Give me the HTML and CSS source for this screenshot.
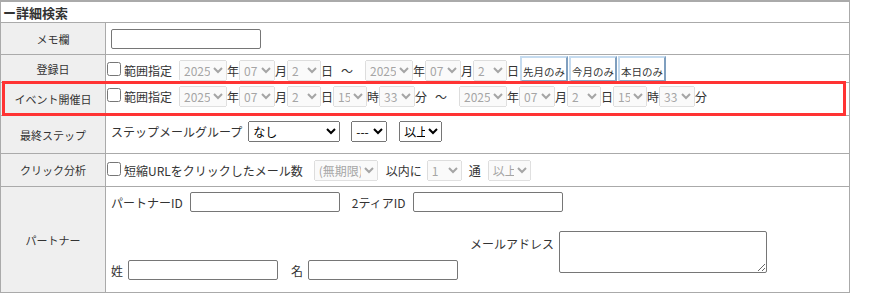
FILE: index.html
```html
<!DOCTYPE html>
<html lang="ja">

<head>
  <meta charset="UTF-8" />
  <meta name="viewport" content="width=device-width, initial-scale=1.0" />
  <title>詳細検索</title>
  <link rel="stylesheet" href="styles.css">
</head>

<body>

  <div class="search-panel">
    <table class="search-table">
      <tr class="head-row">
        <th colspan="2">ー詳細検索</th>
      </tr>

      <!-- メモ -->
      <tr class="row-memo">
        <td class="label">メモ欄</td>
        <td class="field"><input type="text" class="txt"></td>
      </tr>

      <!-- 登録日 -->
      <tr class="row-reg">
        <td class="label">登録日</td>
        <td class="field">
          <div class="line">
            <input type="checkbox" class="chk"><span class="range-text">範囲指定</span>
            <select class="sel-year" disabled><option>2025</option></select><span class="unit">年</span>
            <select class="sel-month" disabled><option>07</option></select><span class="unit">月</span>
            <select class="sel-day" disabled><option>2</option></select><span class="unit">日</span>
            <span class="tilde">～</span>
            <select class="sel-year" disabled><option>2025</option></select><span class="unit">年</span>
            <select class="sel-month" disabled><option>07</option></select><span class="unit">月</span>
            <select class="sel-day" disabled><option>2</option></select><span class="unit">日</span>
            <button class="quick-btn">先月のみ</button>
            <button class="quick-btn">今月のみ</button>
            <button class="quick-btn">本日のみ</button>
          </div>
        </td>
      </tr>

      <!-- イベント開催日 -->
      <tr class="row-event">
        <td class="label">イベント開催日</td>
        <td class="field">
          <div class="line">
            <input type="checkbox" class="chk"><span class="range-text">範囲指定</span>
            <select class="sel-year" disabled><option>2025</option></select><span class="unit">年</span>
            <select class="sel-month" disabled><option>07</option></select><span class="unit">月</span>
            <select class="sel-day" disabled><option>2</option></select><span class="unit">日</span>
            <select class="sel-hour" disabled><option>15</option></select><span class="unit">時</span>
            <select class="sel-min" disabled><option>33</option></select><span class="unit">分</span>
            <span class="tilde">～</span>
            <select class="sel-year" disabled><option>2025</option></select><span class="unit">年</span>
            <select class="sel-month" disabled><option>07</option></select><span class="unit">月</span>
            <select class="sel-day" disabled><option>2</option></select><span class="unit">日</span>
            <select class="sel-hour" disabled><option>15</option></select><span class="unit">時</span>
            <select class="sel-min" disabled><option>33</option></select><span class="unit">分</span>
          </div>
        </td>
      </tr>

      <!-- 最終ステップ -->
      <tr class="row-step">
        <td class="label">最終ステップ</td>
        <td class="field">
          <div class="line">
            <span>ステップメールグループ</span>
            <select class="sel-group"><option>なし</option></select>
            <select class="sel-num"><option>---</option></select>
            <select class="sel-cmp"><option>以上</option></select>
          </div>
        </td>
      </tr>

      <!-- クリック分析 -->
      <tr class="row-click">
        <td class="label">クリック分析</td>
        <td class="field">
          <div class="line">
            <input type="checkbox" class="chk"><span>短縮URLをクリックしたメール数</span>
            <select class="sel-period" disabled><option>(無期限)</option></select>
            <span class="within">以内に</span>
            <select class="sel-count" disabled><option>1</option></select>
            <span class="tsu">通</span>
            <select class="sel-cmp" disabled><option>以上</option></select>
          </div>
        </td>
      </tr>

      <!-- パートナー -->
      <tr class="row-partner">
        <td class="label">パートナー</td>
        <td class="field partner">
          <div class="partner-line">
            <span>パートナーID</span><input type="text" class="txt">
            <span class="next-label">2ティアID</span><input type="text" class="txt">
          </div>
          <div class="partner-bottom">
            <div class="name-group">
              <span>姓</span><input type="text" class="txt">
              <span class="next-label">名</span><input type="text" class="txt">
            </div>
            <div class="mail-group">
              <span class="mail-label">メールアドレス</span>
              <textarea class="mail-box"></textarea>
            </div>
          </div>
        </td>
      </tr>
    </table>

    <!-- 注目枠 -->
    <div class="highlight"></div>
  </div>

</body>

</html>
```

FILE: styles.css
```css
body {
  margin: 0;
  padding: 0;
  font-family: "Noto Sans CJK JP", "Noto Sans", sans-serif;
  font-size: 12px;
  color: #333;
  background-color: #fff;
}

.search-panel {
  position: relative;
  width: 876px;
}

.search-table {
  width: 850px;
  border-collapse: collapse;
  border: 1px solid #aaa;
}

.search-table td,
.search-table th {
  border: 1px solid #aaa;
  padding: 0;
}

/* 見出し */
.head-row th {
  border-top: 2px solid #aaa;
  height: 20px;
  padding: 0 2px;
  text-align: left;
  font-size: 13px;
  font-weight: 700;
  color: #333;
}

.label {
  width: 104px;
  background-color: #efefef;
  text-align: center;
  vertical-align: middle;
  font-size: 11px;
}

.field {
  padding: 0 5px !important;
  vertical-align: middle;
}

.row-memo td { height: 31px; }
.row-reg td { height: 27px; }
.row-event td { height: 32px; }
.row-step td { height: 37px; }
.row-click td { height: 32px; }

/* 中身を少し上寄せ */
.row-event .field {
  height: 27px;
  padding-bottom: 5px !important;
}

.row-step .field {
  height: 31px;
  padding-bottom: 6px !important;
}

.line {
  display: flex;
  align-items: baseline;
  white-space: nowrap;
}

/* フォーム部品 */
.txt {
  width: 150px;
  height: 20px;
  box-sizing: border-box;
  border: 1px solid #767676;
  border-radius: 2px;
  padding: 1px 3px;
  margin: 0;
  font-family: inherit;
  font-size: 12px;
}

.chk {
  width: 14px;
  height: 14px;
  margin: 0 3px 0 -4px;
}

select {
  height: 21px;
  box-sizing: border-box;
  margin: 0;
  font-family: inherit;
  font-size: 12px;
}

.sel-year { width: 48px; }
.sel-month { width: 36px; }
.sel-day { width: 34px; }
.sel-hour { width: 34px; }
.sel-min { width: 36px; }

.range-text {
  margin-right: 7px;
}

.unit {
  width: 12px;
}

.tilde {
  margin: 0 12px 0 8px;
}

.quick-btn {
  display: inline-flex;
  align-items: flex-end;
  box-sizing: border-box;
  height: 26px;
  margin: 0 0 0 1px;
  padding: 0 1px 1px;
  border: 2px solid;
  border-color: #c5dbef #7f9fbf #8aa7c4 #c5dbef;
  background-color: #fff;
  color: #333;
  font-family: inherit;
  font-size: 10.5px;
  line-height: 15px;
  cursor: pointer;
}

.sel-group {
  width: 92px;
  margin-left: 6px;
}

.sel-num {
  width: 36px;
  margin-left: 11px;
}

.sel-cmp {
  width: 43px;
  margin-left: 12px;
}

.sel-period {
  width: 64px;
  margin-left: 11px;
}

.within {
  margin-left: 8px;
}

.sel-count {
  width: 35px;
  margin-left: 5px;
}

.tsu {
  margin-left: 7px;
}

.row-click .sel-cmp {
  margin-left: 7px;
}

/* パートナー欄 */
.partner {
  padding: 5px 5px 12px !important;
}

.partner-line {
  display: flex;
  align-items: center;
  gap: 7px;
}

.partner-line .next-label {
  margin-left: 5px;
}

.name-group {
  display: flex;
  align-items: center;
  gap: 5px;
  margin-top: 29px;
}

.name-group .next-label {
  margin-left: 8px;
}

.partner-bottom {
  display: flex;
  align-items: flex-start;
  margin-top: 19px;
}

.mail-group {
  display: flex;
  align-items: flex-start;
  margin-left: 12px;
}

.mail-label {
  margin-top: 4px;
}

.mail-box {
  width: 208px;
  height: 42px;
  box-sizing: border-box;
  margin: 0 0 0 5px;
  border: 1px solid #767676;
  border-radius: 2px;
  font-family: inherit;
  font-size: 12px;
}

/* 赤枠 */
.highlight {
  position: absolute;
  left: 2px;
  top: 81px;
  width: 844px;
  height: 35px;
  box-sizing: border-box;
  border: 3px solid #ff3333;
  pointer-events: none;
}
```
